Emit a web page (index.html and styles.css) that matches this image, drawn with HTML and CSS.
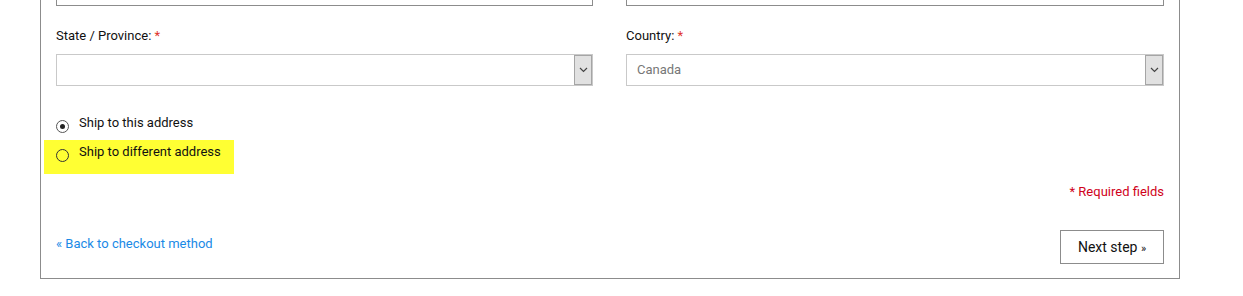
FILE: index.html
```html
<!DOCTYPE html>
<html>
<head>
<meta charset="utf-8">
<link rel="stylesheet" href="styles.css">
</head>
<body>
<div class="page">
  <form class="panel">
    <div class="grid top-row">
      <div class="field"><div class="input dark"></div></div>
      <div class="field"><div class="input dark"></div></div>
    </div>
    <div class="grid">
      <div class="field">
        <label class="label">State / Province: <span class="req">*</span></label>
        <div class="select">
          <span class="select-value"></span>
          <span class="select-btn"><svg width="9" height="6" viewBox="0 0 9 6"><path d="M1 1 L4.5 4.5 L8 1" fill="none" stroke="#444" stroke-width="1.2"/></svg></span>
        </div>
      </div>
      <div class="field">
        <label class="label">Country: <span class="req">*</span></label>
        <div class="select">
          <span class="select-value">Canada</span>
          <span class="select-btn"><svg width="9" height="6" viewBox="0 0 9 6"><path d="M1 1 L4.5 4.5 L8 1" fill="none" stroke="#444" stroke-width="1.2"/></svg></span>
        </div>
      </div>
    </div>
    <div class="radios">
      <div class="radio-row first"><span class="radio checked"></span><span class="radio-text">Ship to this address</span></div>
      <div class="radio-row highlight"><span class="radio"></span><span class="radio-text">Ship to different address</span></div>
    </div>
    <div class="required"><span>* Required fields</span></div>
    <div class="footer">
      <a class="back" href="#">« Back to checkout method</a>
      <span class="next">Next step <span class="raquo">»</span></span>
    </div>
  </form>
</div>
</body>
</html>
```
FILE: styles.css
```css
html, body {
  margin: 0;
  padding: 0;
  background: #fff;
  font-family: Roboto, "Liberation Sans", sans-serif;
  color: #111;
}
.page {
  padding-left: 40px;
  width: 1140px;
  margin-top: -41px;
}
.panel {
  border: 1px solid #8c8c8c;
  padding: 14px 15px 14px 15px;
  display: flex;
  flex-direction: column;
}
.grid {
  display: grid;
  grid-template-columns: 537px 1fr;
  column-gap: 33px;
}
.input {
  height: 32px;
  box-sizing: border-box;
  border: 1px solid #8c8c8c;
}
.top-row {
  margin-bottom: 21px;
}
.field {
  display: flex;
  flex-direction: column;
}
.label {
  font-size: 13px;
  line-height: 18px;
  margin-bottom: 9px;
  color: #111;
}
.req {
  color: #e0352b;
}
.select {
  height: 32px;
  box-sizing: border-box;
  border: 1px solid #c9c9c9;
  display: flex;
  align-items: stretch;
}
.select-value {
  flex: 1;
  padding-left: 10px;
  font-size: 13px;
  line-height: 30px;
  color: #777;
}
.select-btn {
  width: 16px;
  background: #e1e1e1;
  border: 1px solid #a5a5a5;
  display: flex;
  align-items: center;
  justify-content: center;
}
.radios {
  margin-top: 25px;
  display: flex;
  flex-direction: column;
  align-items: flex-start;
}
.radio-row {
  display: flex;
  align-items: flex-start;
  margin-left: -12px;
  padding: 3px 13px 13px 12px;
  font-size: 13px;
}
.radio-row.first {
  padding-bottom: 8px;
}
.highlight {
  background: #ffff33;
}
.radio {
  flex: none;
  width: 11px;
  height: 11px;
  border: 1px solid #333;
  border-radius: 50%;
  box-sizing: content-box;
  position: relative;
  margin-top: 6px;
  margin-bottom: -1px;
  margin-right: 10px;
}
.radio.checked {
  border-color: #555;
}
.radio.checked::after {
  content: "";
  position: absolute;
  left: 3px;
  top: 3px;
  width: 5px;
  height: 5px;
  border-radius: 50%;
  background: #222;
}
.radio-text {
  line-height: 18px;
}
.required {
  display: flex;
  justify-content: flex-end;
  margin-top: 9px;
  font-size: 13px;
  line-height: 18px;
  color: #d0021b;
}
.footer {
  display: flex;
  justify-content: space-between;
  align-items: center;
  margin-top: 29px;
}
.back {
  font-size: 13px;
  color: #1a8ae6;
  text-decoration: none;
  margin-top: -7px;
}
.next {
  display: inline-block;
  box-sizing: border-box;
  height: 34px;
  width: 104px;
  border: 1px solid #8c8c8c;
  font-size: 14px;
  line-height: 32px;
  text-align: center;
  color: #111;
}
.raquo {
  font-size: 11px;
}
```
